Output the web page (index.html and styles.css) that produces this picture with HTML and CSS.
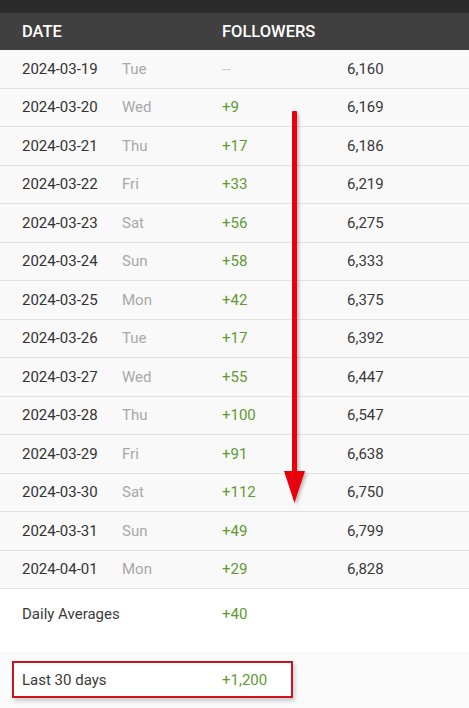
FILE: index.html
```html
<!DOCTYPE html>
<html lang="en">

<head>
    <meta charset="UTF-8" />
    <meta name="viewport" content="width=device-width, initial-scale=1" />
    <title>Followers - Daily Stats</title>
    <link rel="stylesheet" href="styles.css">
</head>

<body>
    <div class="topbar"></div>

    <div class="stats">
        <div class="row head">
            <span class="date">Date</span>
            <span class="day"></span>
            <span class="change">Followers</span>
            <span class="total"></span>
        </div>

        <div class="row"><span class="date">2024-03-19</span><span class="day">Tue</span><span class="change none">--</span><span class="total">6,160</span></div>
        <div class="row"><span class="date">2024-03-20</span><span class="day">Wed</span><span class="change">+9</span><span class="total">6,169</span></div>
        <div class="row"><span class="date">2024-03-21</span><span class="day">Thu</span><span class="change">+17</span><span class="total">6,186</span></div>
        <div class="row"><span class="date">2024-03-22</span><span class="day">Fri</span><span class="change">+33</span><span class="total">6,219</span></div>
        <div class="row"><span class="date">2024-03-23</span><span class="day">Sat</span><span class="change">+56</span><span class="total">6,275</span></div>
        <div class="row"><span class="date">2024-03-24</span><span class="day">Sun</span><span class="change">+58</span><span class="total">6,333</span></div>
        <div class="row"><span class="date">2024-03-25</span><span class="day">Mon</span><span class="change">+42</span><span class="total">6,375</span></div>
        <div class="row"><span class="date">2024-03-26</span><span class="day">Tue</span><span class="change">+17</span><span class="total">6,392</span></div>
        <div class="row"><span class="date">2024-03-27</span><span class="day">Wed</span><span class="change">+55</span><span class="total">6,447</span></div>
        <div class="row"><span class="date">2024-03-28</span><span class="day">Thu</span><span class="change">+100</span><span class="total">6,547</span></div>
        <div class="row"><span class="date">2024-03-29</span><span class="day">Fri</span><span class="change">+91</span><span class="total">6,638</span></div>
        <div class="row"><span class="date">2024-03-30</span><span class="day">Sat</span><span class="change">+112</span><span class="total">6,750</span></div>
        <div class="row"><span class="date">2024-03-31</span><span class="day">Sun</span><span class="change">+49</span><span class="total">6,799</span></div>
        <div class="row"><span class="date">2024-04-01</span><span class="day">Mon</span><span class="change">+29</span><span class="total">6,828</span></div>

        <div class="summary">
            <span class="label">Daily Averages</span>
            <span class="change">+40</span>
        </div>

        <div class="last">
            <div class="highlight">
                <span class="label">Last 30 days</span>
                <span class="change">+1,200</span>
            </div>
        </div>

        <!-- annotation arrow drawn over the table -->
        <svg class="arrow" width="30" height="400" viewBox="0 0 30 400">
            <defs>
                <filter id="soft" x="-50%" y="-10%" width="200%" height="120%">
                    <feDropShadow dx="2" dy="2" stdDeviation="1.5" flood-color="#000" flood-opacity="0.25" />
                </filter>
            </defs>
            <g filter="url(#soft)">
                <rect x="11" y="2" width="5" height="362" rx="1" fill="#e8000f" />
                <polygon points="3,362 24,362 13.5,394" fill="#e8000f" />
            </g>
        </svg>
    </div>
</body>

</html>
```

FILE: styles.css
```css
/* Reset & base */
* {
    margin: 0;
    padding: 0;
    box-sizing: border-box;
}

body {
    font-family: Roboto, 'Liberation Sans', Arial, sans-serif;
    font-size: 15px;
    color: #333;
    background-color: #fafafa;
}

.topbar {
    height: 13px;
    background-color: #2b2b2b;
}

/* Table */
.stats {
    position: relative;
}

.row {
    display: flex;
    align-items: center;
    height: 38.5px;
    padding-left: 22px;
    background-color: #f9f9f9;
    border-bottom: 1px solid #e2e2e2;
}

.row span,
.summary span,
.highlight span {
    white-space: nowrap;
    flex-shrink: 0;
}

.date {
    width: 100px;
}

.day {
    width: 100px;
    color: #a8a8a8;
}

.change {
    width: 125px;
    color: #5e9a32;
}

.change.none {
    color: #c8c8c8;
}

.total {
    color: #3a3a3a;
}

.row.head {
    height: 37px;
    background-color: #404040;
    border-bottom: none;
    color: #fff;
    font-size: 16.5px;
    font-weight: 500;
    text-transform: uppercase;
}

.row.head .change {
    color: #fff;
}

/* Summary */
.summary {
    display: flex;
    align-items: center;
    height: 63px;
    padding-left: 22px;
    padding-bottom: 13px;
    background-color: #fff;
}

.label {
    width: 200px;
    color: #3a3a3a;
}

.last {
    padding: 9px 0 11px 12px;
}

.highlight {
    display: flex;
    align-items: center;
    width: 281px;
    height: 37px;
    padding-left: 8px;
    overflow: hidden;
    border: 2px solid #c8151f;
    background-color: #fff;
    box-shadow: 2px 3px 4px rgba(0, 0, 0, 0.18);
}

.highlight .change {
    width: auto;
}

.arrow {
    position: absolute;
    left: 281px;
    top: 96px;
}
```
